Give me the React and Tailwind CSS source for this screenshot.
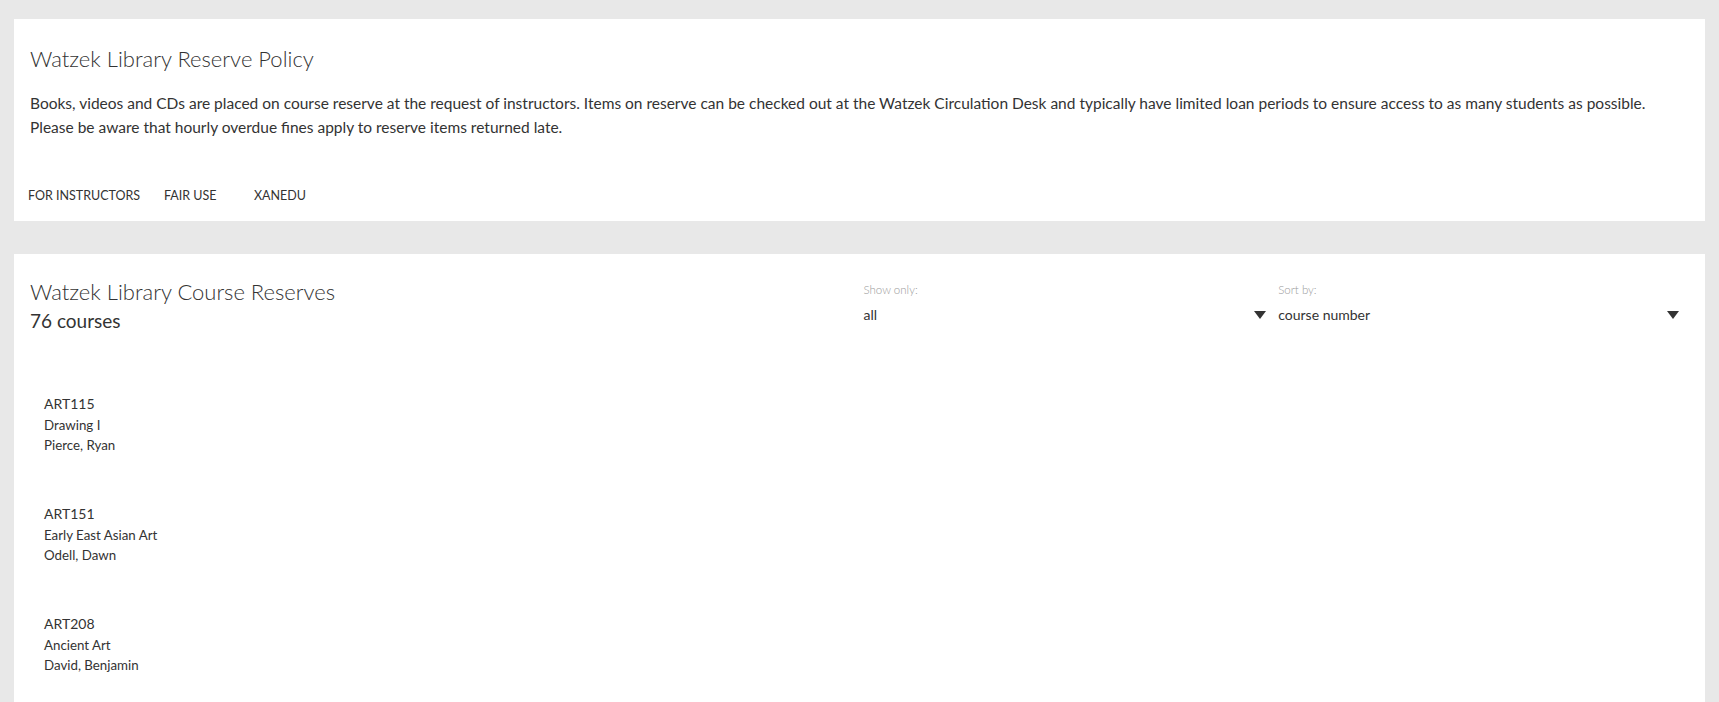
import React from "react";

const courses = [
  { code: "ART115", title: "Drawing I", instructor: "Pierce, Ryan" },
  { code: "ART151", title: "Early East Asian Art", instructor: "Odell, Dawn" },
  { code: "ART208", title: "Ancient Art", instructor: "David, Benjamin" },
];

function Caret() {
  return (
    <svg width="12" height="8" viewBox="0 0 12 8" className="shrink-0">
      <path d="M0 0 L12 0 L6 8 Z" fill="#333" />
    </svg>
  );
}

export default function App() {
  return (
    <div
      className="min-h-screen bg-[#e8e8e8] px-[14px] pt-[19px] text-[#333]"
      style={{ fontFamily: "Lato, 'Open Sans', sans-serif" }}
    >
      <section className="bg-white px-[16px] pt-[24px] pb-[16px]">
        <h1 className="text-[22px] font-light leading-[32px] text-[#333]">
          Watzek Library Reserve Policy
        </h1>
        <p className="mt-[16px] text-[15.5px] leading-[24px] text-[#333]">
          Books, videos and CDs are placed on course reserve at the request of instructors. Items on reserve can be checked out at the Watzek Circulation Desk and typically have limited loan periods to ensure access to as many students as possible. Please be aware that hourly overdue fines apply to reserve items returned late.
        </p>
        <nav className="mt-[48px] flex text-[12.5px] leading-[18px] text-[#333]">
          <a className="-ml-[2px] w-[136px]">FOR INSTRUCTORS</a>
          <a className="w-[90px]">FAIR USE</a>
          <a>XANEDU</a>
        </nav>
      </section>

      <section className="mt-[33px] bg-white px-[16px] pt-[23px] pb-[40px] min-h-[480px]">
        <div className="flex">
          <div className="w-1/2">
            <h2 className="text-[22px] font-light leading-[30px] text-[#333]">
              Watzek Library Course Reserves
            </h2>
            <div className="text-[19px] leading-[28px] text-[#333]">76 courses</div>
          </div>
          <div className="w-1/4 pl-[4px] pr-[8px] pt-[5px]">
            <div className="text-[11.5px] font-light leading-[16px] text-[#9a9a9a]">Show only:</div>
            <div className="mt-[7px] flex items-center justify-between text-[14px] leading-[20px]">
              <span>all</span>
              <Caret />
            </div>
          </div>
          <div className="w-1/4 pl-[4px] pr-[10px] pt-[5px]">
            <div className="text-[11.5px] font-light leading-[16px] text-[#9a9a9a]">Sort by:</div>
            <div className="mt-[7px] flex items-center justify-between text-[14px] leading-[20px]">
              <span>course number</span>
              <Caret />
            </div>
          </div>
        </div>

        <ul className="mt-[58px] pl-[14px]">
          {courses.map((c) => (
            <li key={c.code} className="h-[110px]">
              <div className="text-[14px] leading-[22px] text-[#333]">{c.code}</div>
              <div className="text-[13.3px] leading-[20px] text-[#333]">{c.title}</div>
              <div className="text-[13.3px] leading-[20px] text-[#333]">{c.instructor}</div>
            </li>
          ))}
        </ul>
      </section>
    </div>
  );
}
